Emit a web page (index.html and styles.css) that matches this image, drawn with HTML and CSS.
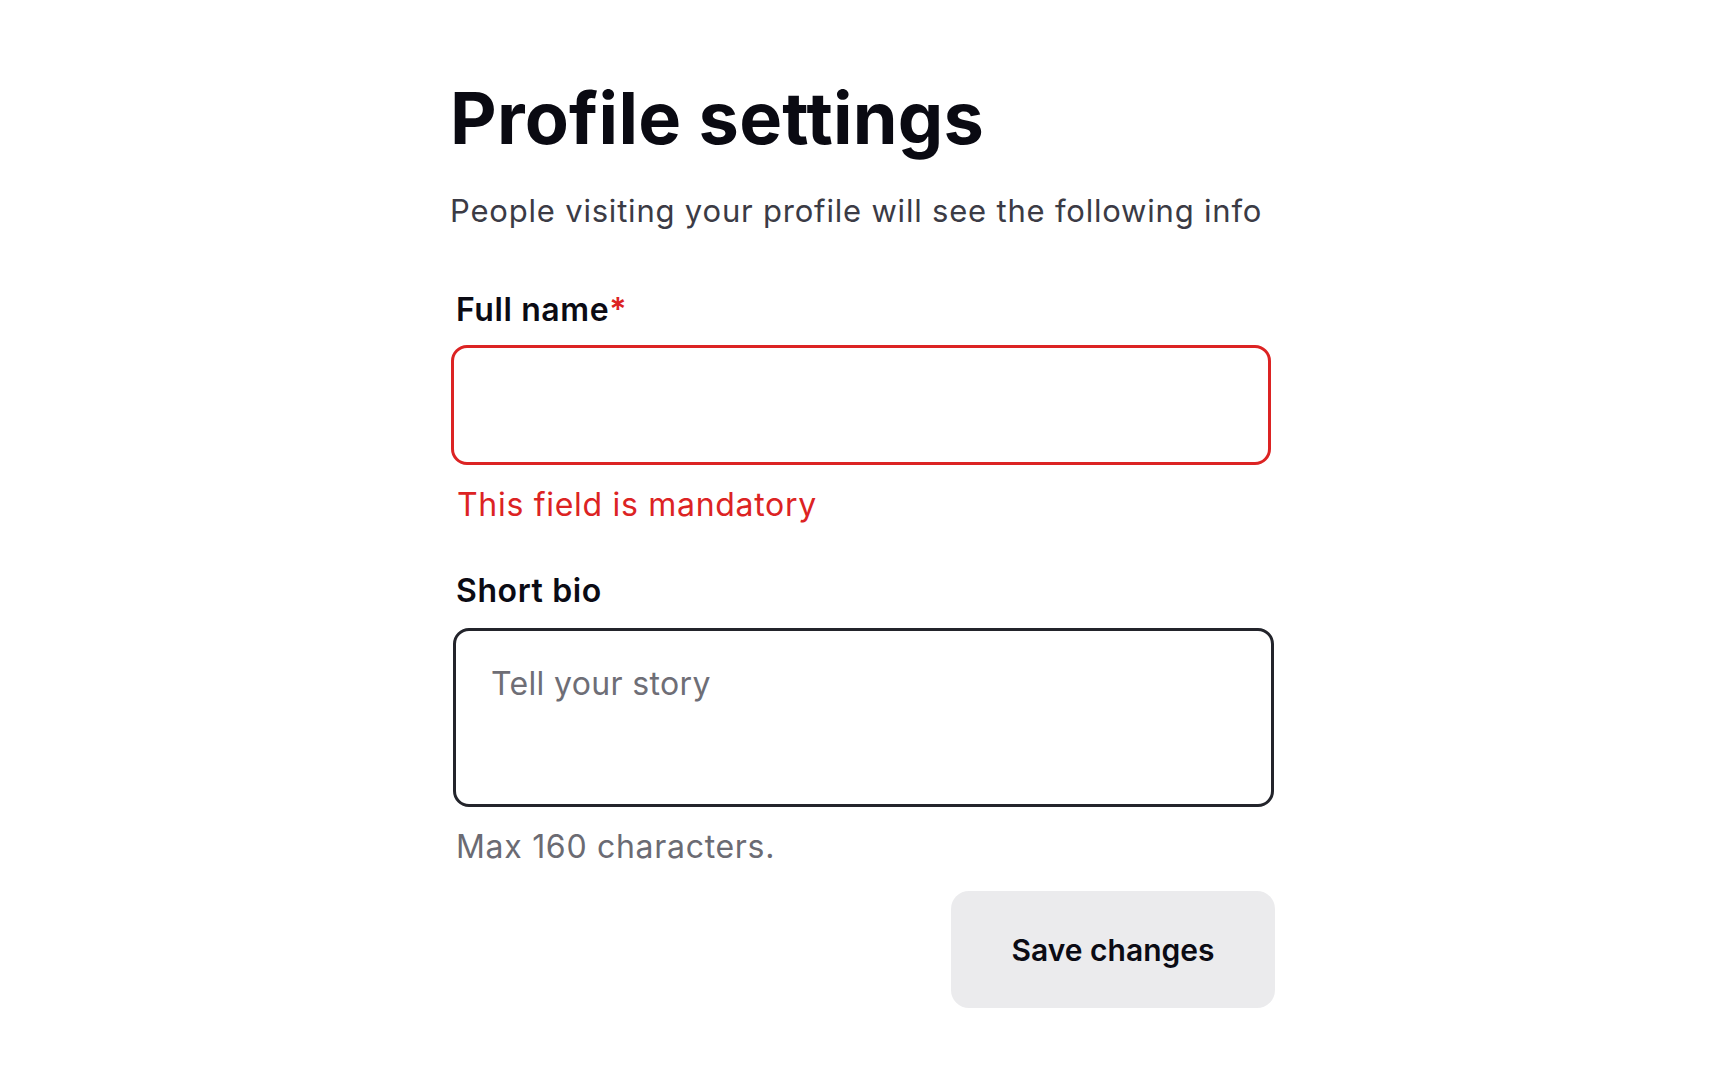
FILE: index.html
```html
<!DOCTYPE html>
<html lang="en">
<head>
<meta charset="utf-8">
<title>Profile settings</title>
<link rel="stylesheet" href="styles.css">
</head>
<body>
<main class="page">
  <form class="form">
    <h1 class="title">Profile settings</h1>
    <p class="subtitle">People visiting your profile will see the following info</p>

    <div class="field field-name">
      <label class="label" for="fullname">Full name<span class="req">*</span></label>
      <input class="input input-error" id="fullname" type="text">
      <p class="error">This field is mandatory</p>
    </div>

    <div class="field field-bio">
      <label class="label" for="bio">Short bio</label>
      <textarea class="textarea" id="bio" placeholder="Tell your story"></textarea>
      <p class="help">Max 160 characters.</p>
    </div>

    <div class="actions">
      <button class="btn" type="button">Save changes</button>
    </div>
  </form>
</main>
</body>
</html>
```

FILE: styles.css
```css
html, body {
  margin: 0;
  padding: 0;
  background: #ffffff;
}

body {
  font-family: Inter, "Noto Sans", "Liberation Sans", sans-serif;
  color: #0b0b14;
}

.page {
  display: flex;
  justify-content: center;
  padding-top: 75px;
}

.form {
  width: 822px;
  display: flex;
  flex-direction: column;
}

.title {
  margin: 0 0 0 -3px;
  font-size: 72px;
  line-height: 1.2;
  font-weight: 700;
  color: #0a0a12;
  letter-spacing: 0.25px;
}

.subtitle {
  margin: 31px 0 0 -3px;
  font-size: 31px;
  line-height: 1.2;
  font-weight: 400;
  color: #3b3b45;
  letter-spacing: 0.8px;
}

.field {
  display: flex;
  flex-direction: column;
}

.field-name {
  margin-top: 61px;
}

.field-bio {
  margin-top: 48px;
}

.label {
  padding-left: 3px;
  font-size: 32px;
  line-height: 1.2;
  font-weight: 600;
  color: #0b0b14;
  letter-spacing: 0.6px;
}

.req {
  color: #dc2323;
}

.input {
  box-sizing: border-box;
  margin: 16px 0 0 -2px;
  width: 820px;
  height: 120px;
  border: 3px solid #dc2323;
  border-radius: 16px;
  background: #ffffff;
  outline: none;
  font: inherit;
  font-size: 32px;
  padding: 0 32px;
}

.textarea {
  box-sizing: border-box;
  margin-top: 17px;
  width: 821px;
  height: 179px;
  border: 3px solid #23242b;
  border-radius: 16px;
  background: #ffffff;
  resize: none;
  outline: none;
  font-family: inherit;
  font-size: 32px;
  line-height: 1.2;
  padding: 34px 35px;
  color: #0b0b14;
  letter-spacing: 0.35px;
}

.textarea::placeholder {
  color: #6e6e76;
  opacity: 1;
}

.error,
.help {
  margin: 21px 0 0;
  padding-left: 4px;
  font-size: 32px;
  line-height: 1.2;
  font-weight: 400;
  letter-spacing: 0.7px;
}

.error {
  color: #dc2323;
}

.help {
  padding-left: 3px;
  color: #6b6b73;
}

.actions {
  display: flex;
  justify-content: flex-end;
  margin-top: 25px;
}

.btn {
  width: 324px;
  height: 117px;
  border: none;
  border-radius: 18px;
  background: #ebebed;
  font-family: inherit;
  font-size: 30px;
  font-weight: 600;
  color: #0b0b14;
  cursor: pointer;
}
```
